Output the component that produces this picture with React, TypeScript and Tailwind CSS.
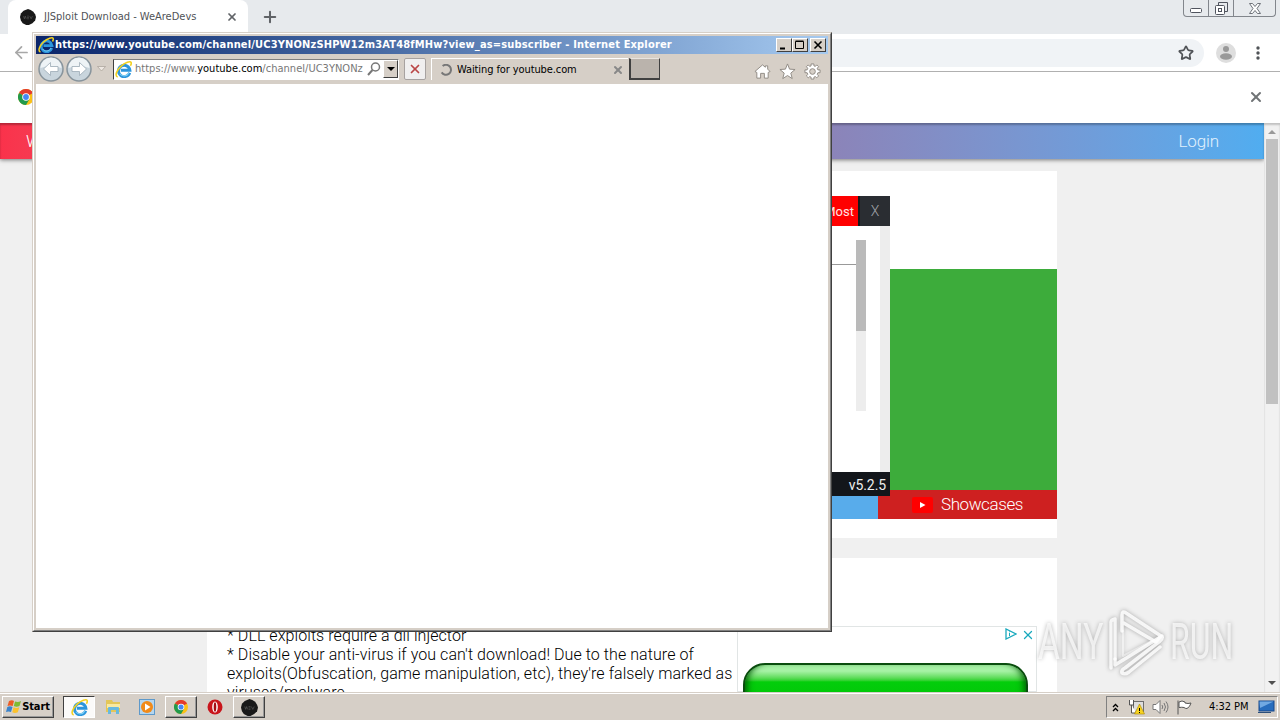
import type { ReactNode } from "react";
import { Star, X, Plus, ArrowLeft } from "lucide-react";

const ui = "font-['DejaVu_Sans_Condensed','DejaVu_Sans',sans-serif] whitespace-nowrap";

function IeIcon({ className }: { className: string }) {
  return (
    <svg viewBox="0 0 16 16" className={className} fill="none">
      <path d="M13.800 11A5.400 5.400 0 1 1 14 8.600H5.500" stroke="#2b95dc" strokeWidth="2.800" />
      <path d="M13 11.200A5 5 0 0 1 4.500 12" stroke="#7fd0f5" strokeWidth="1" />
      <path d="M2.500 15C-.5 14 1.500 8.800 5.500 5 9.500 1.300 14.600-.2 15.200 1.500c.3.800-.1 2-.7 3" stroke="#f2d020" strokeWidth="1.500" />
    </svg>
  );
}

function ChromeIcon({ className }: { className: string }) {
  return (
    <svg viewBox="0 0 16 16" className={className}>
      <circle cx="8" cy="8" r="8" fill="#fbc116" />
      <path d="M8 8 1.070 4A8 8 0 0 1 14.930 4Z" fill="#e33b2e" />
      <path d="M8 8 1.070 4A8 8 0 0 0 8 16L11.500 10Z" fill="#229a4c" />
      <circle cx="8" cy="8" r="3.800" fill="#fff" />
      <circle cx="8" cy="8" r="2.900" fill="#4587f3" />
    </svg>
  );
}

function DevsIcon({ className }: { className: string }) {
  return (
    <svg viewBox="0 0 18 18" className={className}>
      <path d="m9 0 3 1 3 2 2 3 1 3-1 4-3 3-4 2H7l-4-2-2-3-1-4 1-4 3-3Z" fill="#191919" />
      <path d="M4 8l1 3 1-3 1 3M8 8h2M8 9.500h2M8 11h2M11 8l1.500 3L14 8" stroke="#666" strokeWidth=".6" fill="none" />
    </svg>
  );
}

function BrowserChrome() {
  return (
    <>
      <div className="flex h-[34px] shrink-0 items-end bg-[#e7eaed] pl-2">
        <div className="flex h-full w-[240px] items-center rounded-t-lg bg-white pl-3">
          <DevsIcon className="h-4 w-4" />
          <span className={`${ui} ml-2 w-[182px] text-[11px] tracking-[-0.01px] text-[#505357]`}>JJSploit Download - WeAreDevs</span>
          <X className="h-3 w-3 shrink-0 text-[#606367]" strokeWidth={3.500} />
        </div>
        <Plus className="mb-2 ml-[13px] h-[18px] w-[18px] text-[#606367]" strokeWidth={2.700} />
        <div className="mr-1 ml-auto flex h-[17px] w-[93px] self-start rounded-b-[4px] border border-t-0 border-[#82868c]">
          <div className="flex w-[25px] items-center justify-center border-r border-[#82868c]">
            <svg viewBox="0 0 12 5" className="mt-1 h-[5px] w-3"><rect x=".5" y=".5" width="11" height="4" rx="1" fill="#fff" stroke="#50545e" /></svg>
          </div>
          <div className="flex w-[25px] items-center justify-center border-r border-[#82868c]">
            <svg viewBox="0 0 13 13" className="h-[13px] w-[13px]" fill="none" stroke="#50545e">
              <path d="M3.500 3V.5h9v9H10" />
              <rect x=".5" y="3.500" width="9" height="9" rx="1" fill="#fff" />
              <rect x="3.500" y="6.500" width="3" height="3" />
            </svg>
          </div>
          <div className="flex flex-1 items-center justify-center">
            <svg viewBox="0 0 12 11" className="h-[11px] w-3"><path d="M.5.500h3L6 3.500 8.500.500h3L8 5.500l3.500 5h-3L6 7.500l-2.500 3h-3L4 5.500Z" fill="#fff" stroke="#60646c" strokeWidth=".9" /></svg>
          </div>
        </div>
      </div>
      <div className="flex h-[38px] shrink-0 items-center border-b border-[#b0b0b0] bg-white pl-3">
        <ArrowLeft className="h-[19px] w-[19px] text-[#a8a8a8]" strokeWidth={2.200} />
        <div className="ml-10 flex h-7 w-[1133px] items-center justify-end rounded-full bg-[#f0f3f6] pr-[10px]">
          <Star className="h-4 w-4 text-[#505357]" strokeWidth={2.600} />
        </div>
        <svg viewBox="0 0 20 20" className="ml-3 h-5 w-5">
          <circle cx="10" cy="10" r="10" fill="#dedede" />
          <circle cx="10" cy="6" r="3" fill="#999" />
          <ellipse cx="10" cy="13.500" rx="6" ry="3.200" fill="#999" />
        </svg>
        <svg viewBox="0 0 4 14" className="ml-5 h-[14px] w-1" fill="#505357">
          <circle cx="2" cy="2" r="1.700" /><circle cx="2" cy="7" r="1.700" /><circle cx="2" cy="12" r="1.700" />
        </svg>
      </div>
      <div className="flex h-[51px] shrink-0 items-center justify-between bg-white pr-4 pb-0.5 pl-[18px]">
        <ChromeIcon className="h-4 w-4" />
        <X className="h-4 w-4 text-[#707376]" strokeWidth={3} />
      </div>
    </>
  );
}

function AppPreview() {
  return (
    <div className="absolute top-[25px] right-[167px] flex h-[300px] w-[500px] flex-col bg-white">
      <div className="flex h-[30px] justify-end bg-[#2a2d32]">
        <div className="flex w-20 items-center justify-end border-r-2 border-[#17191c] bg-[#f00] pt-px pr-1 text-[13px] text-[#ffe4e4]">Top Most</div>
        <div className="flex w-[30px] items-center justify-center pt-px text-[14px] font-light text-[#a0a4aa]">X</div>
      </div>
      <div className="flex flex-1 justify-end">
        <div className="mt-[38px] h-px flex-1 bg-[#999]" />
        <div className="mt-[14px] h-[171px] w-[10px] bg-[#ededed]"><div className="h-[91px] bg-[#bababa]" /></div>
        <div className="ml-[14px] w-[10px] bg-[#ededed]" />
      </div>
      <div className="flex h-6 items-center justify-end bg-[#13161b] pt-[3px] pr-1 text-[14px] tracking-[-0.1px] text-[#eee]">v5.2.5</div>
    </div>
  );
}

function WebPage() {
  return (
    <div className="flex min-h-0 flex-1 bg-[#f0f0f0] font-[Roboto,sans-serif]">
      <div className="flex min-w-0 flex-1 flex-col overflow-hidden">
        <nav className="flex h-9 shrink-0 items-center justify-between bg-linear-to-r from-[#fa324b] via-[#8b84b9] via-66% to-[#50adf0] pt-px pr-[45px] pl-[26px] text-[17px] font-light text-white shadow-[0_1px_4px_#777,inset_0_2px_2px_#0004]">
          <span>WeAreDevs</span>
          <span className="tracking-[-0.1px] text-[#e1f1fd]">Login</span>
        </nav>
        <section className="relative mt-3 ml-[207px] h-[367px] w-[850px] shrink-0 bg-white pt-[98px]">
          <div className="h-[221px] bg-[#3dac3b]" />
          <div className="flex h-[29px] text-[17px] font-light text-white">
            <div className="flex-1 bg-[#58aceb]" />
            <div className="flex w-[179px] items-center justify-center gap-2 bg-[#ce2020]">
              <svg viewBox="0 0 21 16" className="h-4 w-[21px]"><rect width="21" height="16" rx="2" fill="#f00" /><path d="m8 5 5.500 3L8 11Z" fill="#fff" /></svg>
              <span className="tracking-[-0.4px]">Showcases</span>
            </div>
          </div>
          <AppPreview />
        </section>
        <section className="mt-5 ml-[207px] flex h-[134px] w-[850px] shrink-0 overflow-hidden bg-white">
          <div className="w-[530px] pt-[68px] pl-5 text-[16px] leading-[19px] font-light tracking-[0.07px] whitespace-nowrap text-black">
            <p>* DLL exploits require a dll injector</p>
            <p>* Disable your anti-virus if you can't download! Due to the nature of</p>
            <p>exploits(Obfuscation, game manipulation, etc), they're falsely marked as</p>
            <p>viruses/malware.</p>
          </div>
          <div className="mt-[68px] w-[300px] border border-[#e1e5e5] px-[5px]">
            <div className="flex h-9 items-start justify-end gap-1 pt-px">
              <svg viewBox="0 0 12 12" className="h-3 w-3" fill="none" stroke="#19a9bd"><path d="M1 1v10l10-5Z" strokeWidth="1.300" /><path d="M4.500 5v3M4.500 3.500v.8" /></svg>
              <X className="-mr-1 h-[14px] w-[14px] text-[#19a9bd]" strokeWidth={2.200} />
            </div>
            <div className="h-20 w-[285px] rounded-t-[22px] border-2 border-[#0a4d0e] bg-linear-to-b from-[#a6f2a5] from-8% via-[#03ce0b] via-22% to-[#00b304] shadow-[inset_7px_0_7px_-5px_#015b05,inset_-7px_0_7px_-5px_#015b05]" />
          </div>
        </section>
      </div>
      <div className="flex w-4 flex-col items-center bg-[#f1f1f1] shadow-[inset_0_2px_2px_#0003]">
        <div className="flex h-4 items-center pt-0.5"><div className="h-0 w-0 border-x-4 border-b-4 border-x-transparent border-b-[#999]" /></div>
        <div className="h-[265px] w-3 bg-[#c1c1c1]" />
        <div className="mt-auto mb-[7px] h-0 w-0 border-x-4 border-t-4 border-x-transparent border-t-[#505050]" />
      </div>
    </div>
  );
}

function RoundNav({ flip = false }: { flip?: boolean }) {
  return (
    <svg viewBox="0 0 26 26" className={flip ? "h-[26px] w-[26px] -scale-x-100" : "h-[26px] w-[26px]"}>
      <circle cx="13" cy="13" r="12" fill="#c9d5dd" stroke="#88949c" strokeWidth="1.500" />
      <path d="M2.500 12a10.500 10.500 0 0 1 21 0q-10.500-4-21 0" fill="#eef3f6" />
      <path d="M5.500 13l7-6.500v4h7.500v5h-7.500v4Z" fill="#fff" stroke="#9cabb6" strokeWidth=".8" />
    </svg>
  );
}

function CaptionButton({ children }: { children: ReactNode }) {
  return (
    <div className="flex h-[14px] w-4 items-center justify-center border border-t-white border-r-[#404040] border-b-[#404040] border-l-white bg-[#d6cfc7]">
      <svg viewBox="0 0 10 10" className="h-[10px] w-[10px]" fill="none" stroke="#000">{children}</svg>
    </div>
  );
}

function ExplorerWindow() {
  return (
    <div className="absolute top-8 left-8 flex h-[600px] w-[800px] flex-col border border-t-[#d6cfc7] border-r-[#404040] border-b-[#404040] border-l-[#d6cfc7] bg-white">
      <div className="flex flex-1 flex-col border border-t-white border-r-[#808080] border-b-[#808080] border-l-white">
        <div className="flex flex-1 flex-col border-2 border-[#d6cfc7]">
          <div className="flex h-[18px] items-center bg-linear-to-r from-[#0a246a] to-[#a6caf0] pr-0.5 pl-0.5">
            <IeIcon className="h-4 w-4 shrink-0" />
            <span className={`${ui} ml-px pt-px text-[11px] font-bold tracking-[0.165px] text-white`}>
              https://www.youtube.com/channel/UC3YNONzSHPW12m3AT48fMHw?view_as=subscriber - Internet Explorer
            </span>
            <div className="ml-auto flex">
              <CaptionButton><path d="M1 8.500h5" strokeWidth="2" /></CaptionButton>
              <CaptionButton><path d="M.5 1.500h8v7h-8ZM.5 1h8" /></CaptionButton>
              <div className="ml-0.5"><CaptionButton><path d="m1.500 1.500 7 7m0-7-7 7" strokeWidth="1.600" /></CaptionButton></div>
            </div>
          </div>
          <div className="flex h-[30px] items-center bg-[#d6cfc7] pl-0.5">
            <RoundNav />
            <div className="ml-0.5"><RoundNav flip /></div>
            <svg viewBox="0 0 9 6" className="ml-[5px] h-[6px] w-[9px]"><path d="M.5.500h8l-4 4.500Z" fill="#eee8e2" stroke="#a69f96" strokeWidth=".7" /></svg>
            <div className="ml-[7px] flex h-[21px] w-[286px] items-center border border-t-[#808080] border-r-white border-b-white border-l-[#404040] bg-white pl-px">
              <IeIcon className="h-[17px] w-[17px] shrink-0" />
              <span className={`${ui} ml-[3px] w-[230px] overflow-hidden pt-px text-[11px] tracking-[0.02px] text-[#777]`}>
                https://www.<span className="text-black">youtube.com</span>/channel/UC3YNONz
              </span>
              <svg viewBox="0 0 14 14" className="ml-0.5 h-[14px] w-[14px] shrink-0" fill="none" stroke="#777" strokeWidth="1.500"><circle cx="8.500" cy="5" r="4" /><path d="m5.500 8-4.500 5" strokeWidth="2" /></svg>
              <div className="ml-0.5 flex h-[18px] w-[15px] shrink-0 items-center justify-center border border-t-white border-r-[#404040] border-b-[#404040] border-l-white bg-[#d6cfc7]">
                <div className="h-0 w-0 border-x-4 border-t-4 border-x-transparent border-t-black" />
              </div>
            </div>
            <div className="ml-[5px] flex h-[22px] w-[22px] items-center justify-center rounded-[2px] border border-[#a7a2a0] bg-[#f0efef]">
              <X className="h-[14px] w-[14px] text-[#ba4646]" strokeWidth={3} />
            </div>
            <div className="ml-[5px] flex h-[22px] w-[197px] items-center border-t border-l border-white pr-[4px] pl-2">
              <svg viewBox="0 0 12 12" className="h-3 w-3" fill="none" stroke="#777" strokeWidth="2"><path d="M3 1.800A5 5 0 1 1 1.500 8" transform="rotate(-5 6 6)" /></svg>
              <span className={`${ui} ml-[5px] pt-px text-[11px] tracking-[-0.1px] text-black`}>Waiting for youtube.com</span>
              <X className="ml-auto h-3 w-3 text-[#888]" strokeWidth={4} />
            </div>
            <div className="ml-px h-[22px] w-[31px] border border-t-[#e8e4df] border-r-[#404040] border-b-2 border-l-2 border-b-[#404040] border-l-[#404040] bg-[#bab3ac]" />
            <div className="mt-1 mr-[7px] ml-auto flex gap-2">
              <svg viewBox="0 0 18 18" className="h-[17px] w-[17px]"><path d="M1 9 9 2l3 2.500V3h2.500v3.500L17 9l-2 1v6h-4v-5H7v5H3v-6Z" fill="#fff" stroke="#8e8983" /></svg>
              <svg viewBox="0 0 18 18" className="h-[17px] w-[17px]"><path d="m9 1 2.200 5.500 5.800.400-4.500 3.800 1.500 5.800-5-3.200-5 3.200 1.500-5.800L1 6.900l5.800-.4Z" fill="#fff" stroke="#8e8983" /></svg>
              <svg viewBox="0 0 18 18" className="h-[17px] w-[17px]">
                <path fillRule="evenodd" d="M7.500 1h3v2l1.500.6L13.500 2l2 2L14 5.500l.7 1.800h2.300v3h-2.300L14 12l1.500 1.700-2 2L12 14.400l-1.500.6v2h-3v-2L6 14.400l-1.500 1.300-2-2L4 12l-.7-1.700H1v-3h2.300L4 5.500 2.500 4l2-2L6 3.600 7.500 3ZM9 6a3 3 0 1 0 0 6 3 3 0 0 0 0-6Z" fill="#fff" stroke="#8e8983" />
              </svg>
            </div>
          </div>
          <div className="flex-1 bg-white" />
        </div>
      </div>
    </div>
  );
}

function Taskbar() {
  const raised = "flex h-[22px] items-center justify-center border border-t-white border-l-white border-r-[#404040] border-b-[#404040] shadow-[inset_-1px_-1px_#999]";
  return (
    <footer className="flex h-7 shrink-0 items-center border-t border-[#d6cfc7] bg-[#d6cfc7] pt-px pr-0.5 pl-0.5 shadow-[inset_0_1px_white]">
      <div className={`${raised} w-[52px]`}>
        <svg viewBox="0 0 16 16" className="h-4 w-4 shrink-0">
          <path d="M3 2q3-1.500 5 0L6.700 7Q4 6 1.500 7Z" fill="#ed5c24" />
          <path d="M9 2.500q3 1.200 6-.5l-1.500 5q-3 1.500-5.700 0Z" fill="#7fbb32" />
          <path d="M1.300 8q2.500-1.300 5.200 0L5 13q-2.500-1-5 0Z" fill="#3b83cb" />
          <path d="M7.600 8.300q2.700 1.300 5.700 0l-1.500 5q-3 1.500-5.500 0Z" fill="#fbc12c" />
        </svg>
        <span className={`${ui} pt-px text-[11px] font-bold tracking-[-0.1px] text-black`}>Start</span>
      </div>
      <div className="ml-[9px] flex h-[22px] w-8 items-center justify-center border border-t-[#404040] border-r-white border-b-white border-l-[#404040] bg-[#fbfaf9]"><IeIcon className="h-[17px] w-[17px]" /></div>
      <svg viewBox="0 0 17 16" className="ml-[10px] h-4 w-[17px]">
        <path d="M1 1h6l1 2h7v10H1Z" fill="#e3c658" /><path d="M2 5h13v4H2Z" fill="#f9e9a0" /><path d="M3 15V9q0-1 1-1h9q1 0 1 1v6h-3v-4H6v4Z" fill="#68b9df" />
      </svg>
      <svg viewBox="0 0 16 16" className="ml-[17px] h-4 w-4"><rect x=".5" y=".5" width="15" height="15" fill="#b5d6ef" stroke="#5e99ca" /><circle cx="8" cy="8" r="6" fill="#f18a19" /><path d="m6 4.500 5.500 3.500L6 11.500Z" fill="#fff" /></svg>
      <div className={`${raised} ml-[10px] w-8`}><ChromeIcon className="h-[14px] w-[14px]" /></div>
      <svg viewBox="0 0 16 16" className="ml-[10px] h-4 w-4"><circle cx="8" cy="8" r="7.500" fill="#c9151b" /><ellipse cx="8" cy="8" rx="2.800" ry="5.500" fill="#fff" /><ellipse cx="8" cy="8" rx="1.300" ry="4.700" fill="#a60d13" /></svg>
      <div className={`${raised} ml-[10px] w-8`}><DevsIcon className="h-[17px] w-[17px]" /></div>
      <div className="ml-auto flex h-[22px] w-[172px] items-center border border-t-[#808080] border-r-white border-b-white border-l-[#808080] pl-[5px]">
        <svg viewBox="0 0 7 9" className="h-[9px] w-[7px]" fill="none" stroke="#000" strokeWidth="1.300"><path d="m1 4 2.500-2.500L6 4M1 8l2.500-2.500L6 8" /></svg>
        <svg viewBox="0 0 17 16" className="ml-[9px] h-4 w-[17px]">
          <rect x="5.500" y="2.500" width="10" height="10" fill="#ddd" stroke="#6d6d6d" /><path d="M1.500 1v5h4V1M3.500 6v8h5" fill="#fff" stroke="#555" /><path d="m11.500 5 5 10H6.500Z" fill="#f7d320" stroke="#a88400" strokeWidth=".6" /><path d="M11.500 9v3m0 1v1" stroke="#000" />
        </svg>
        <svg viewBox="0 0 17 16" className="ml-[7px] h-4 w-[17px]" fill="none" stroke="#777"><path d="M1 5.500h3l4-4v13l-4-4H1Z" fill="#fff" /><path d="M10 6q1.500 2 0 4M12 4q3 4 0 8M14 2.500q4 5.500 0 11" /></svg>
        <svg viewBox="0 0 17 16" className="ml-[7px] h-4 w-[17px]"><path d="M2 1.500v14M3 3q3-2 6 0v1q3 1 6 0-1 4-4 5.500-2 0-3-1-2-.5-5 0Z" fill="#fff" stroke="#555" /></svg>
        <span className={`${ui} ml-4 pt-px text-[11px] tracking-[-0.05px] text-black`}>4:32 PM</span>
        <svg viewBox="0 0 17 14" className="mr-0.5 ml-auto h-[14px] w-[17px]"><rect x="1" y="1" width="15" height="10" fill="#286dbd" stroke="#16498b" /><path d="M1.500 1.500h14L2 8Z" fill="#71a9e2" /><path d="M0 12h13v1H0" fill="#2c4e79" /></svg>
      </div>
    </footer>
  );
}

function Watermark() {
  return (
    <div className="absolute top-[606px] left-[1038px] flex items-center font-[Roboto,sans-serif] text-[50px] leading-[72px] text-white/70 drop-shadow-[0_0_2px_#999]">
      <div className="w-[67px]"><span className="inline-block origin-left scale-x-[0.67]">ANY</span></div>
      <svg viewBox="0 0 60 70" className="h-[70px] w-[60px] shrink-0" fill="none" stroke="#fff" strokeOpacity=".85" strokeWidth="3.500" strokeLinecap="round" strokeLinejoin="round">
        <path d="M6 61V15q0-2 4-3v40" />
        <path d="M17 24V8q0-5 4-2l35 23-5 6-34-20" />
        <path d="M10 52V58l47-29q1 3-2 5L20 61q-4 2-3 5 3 2 7-1l31-25" />
        <path d="M18 24v25l29-15" strokeOpacity=".5" strokeWidth="2" />
      </svg>
      <div className="ml-[5px] w-[66px]"><span className="inline-block origin-left scale-x-[0.64]">RUN</span></div>
    </div>
  );
}

export default function App() {
  return (
    <div className="relative flex h-[720px] w-[1280px] flex-col overflow-hidden bg-white">
      <BrowserChrome />
      <WebPage />
      <Taskbar />
      <ExplorerWindow />
      <Watermark />
    </div>
  );
}
